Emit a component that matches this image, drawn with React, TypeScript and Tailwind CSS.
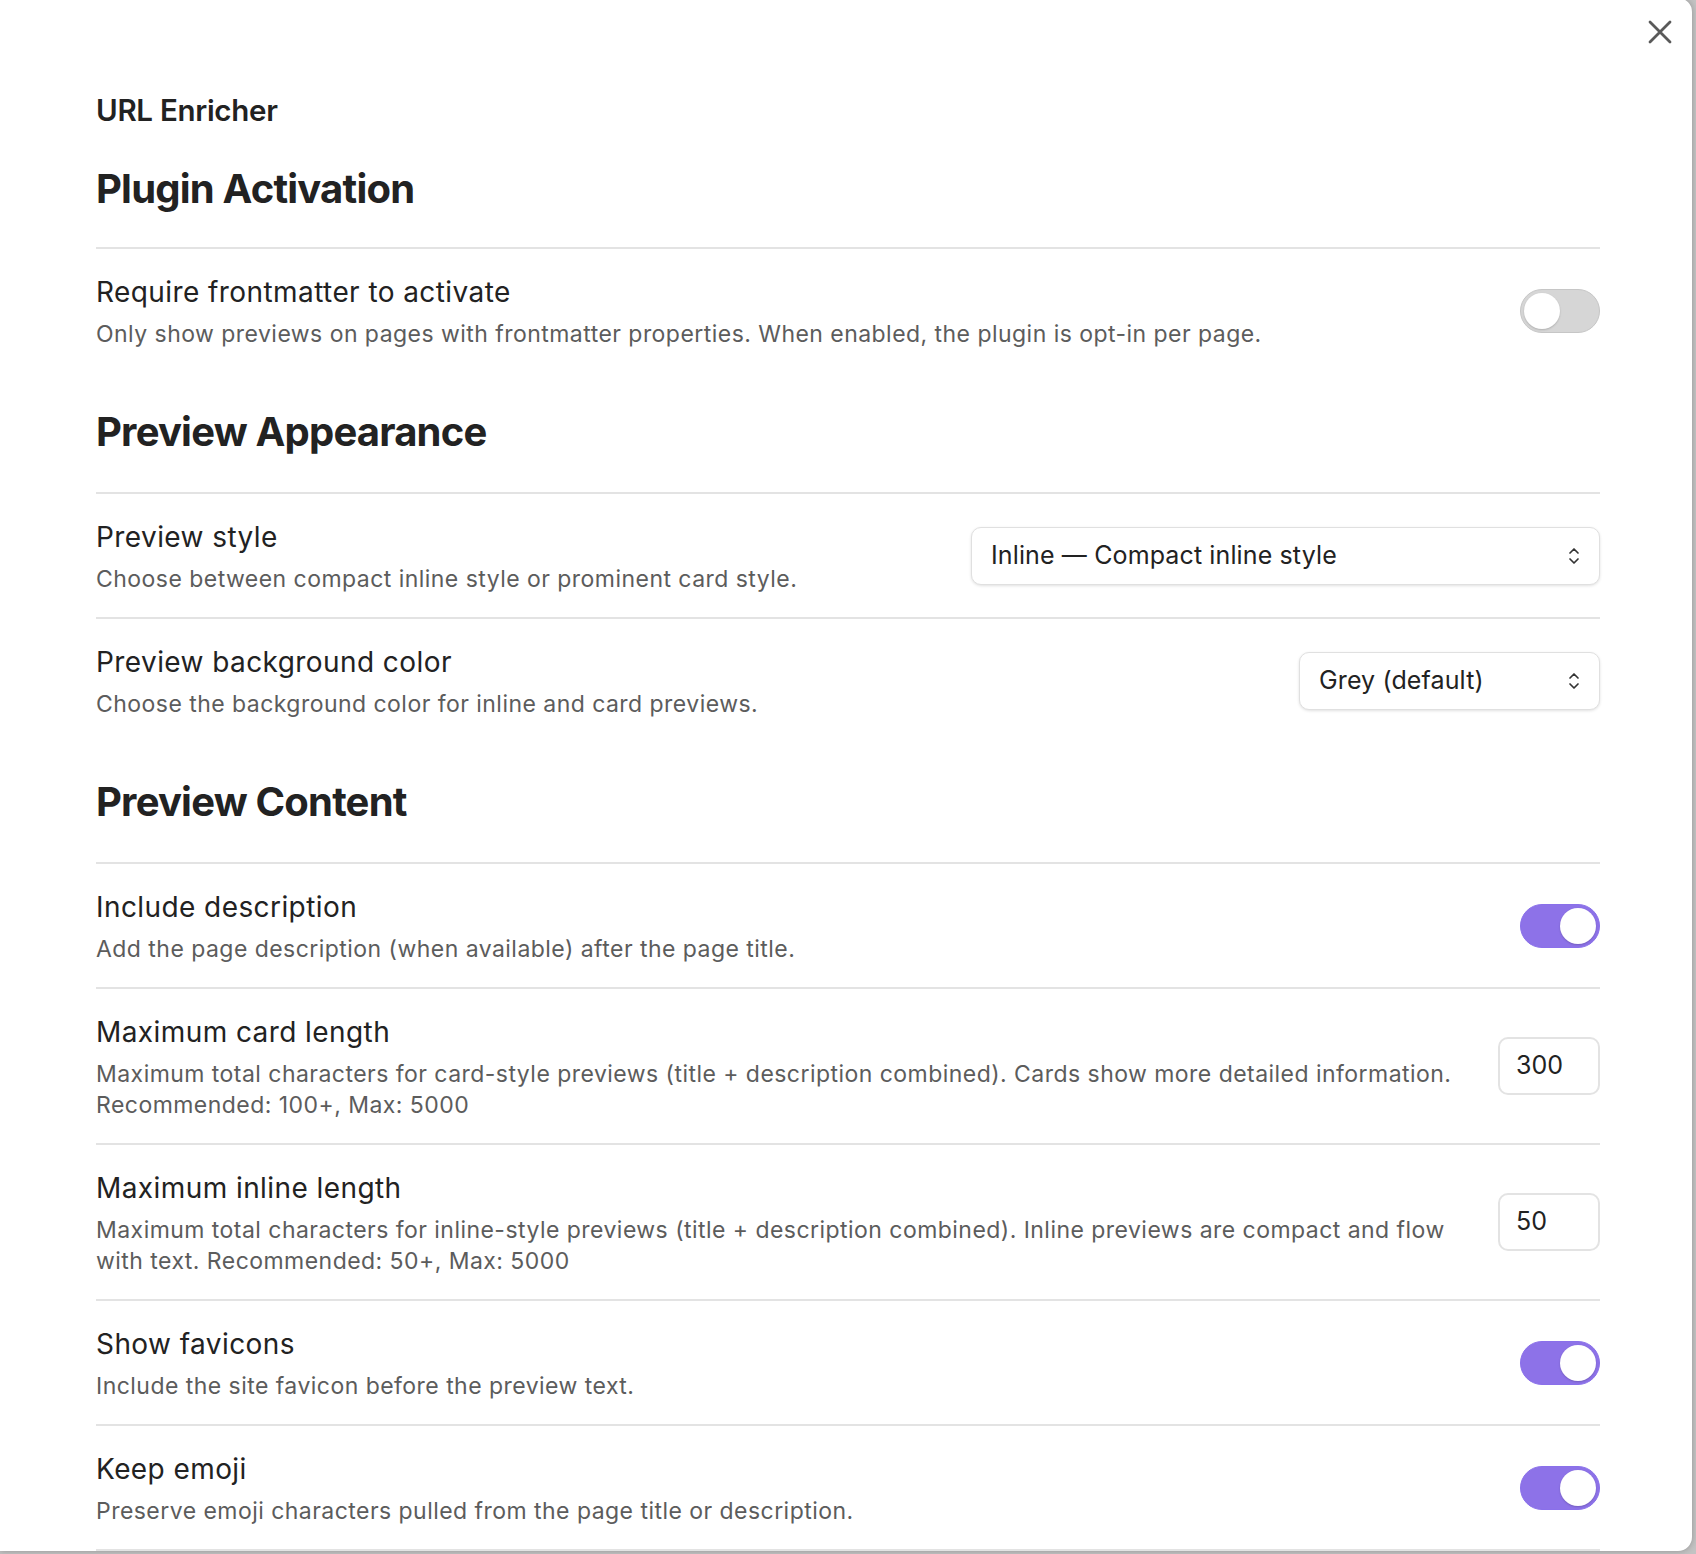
import type { ReactNode } from "react";

const font = { fontFamily: "Inter, 'Noto Sans', sans-serif" };

const Toggle = ({ on }: { on: boolean }) => (
  <div
    className={
      on
        ? "flex h-[44px] w-[80px] shrink-0 items-center justify-end rounded-full border border-[#8a70ea] bg-[#8d72e8] p-[3px]"
        : "flex h-[44px] w-[80px] shrink-0 items-center justify-start rounded-full border border-[#c6c6c6] bg-[#d6d6d6] p-[3px]"
    }
  >
    <div className="h-[36px] w-[36px] rounded-full bg-white shadow-[0_1px_2px_rgba(0,0,0,0.18)]" />
  </div>
);

const Chevrons = () => (
  <svg width="14" height="22" viewBox="0 0 14 22" fill="none" className="shrink-0">
    <path d="M3 8 L7 4 L11 8" stroke="#333" strokeWidth="1.7" strokeLinecap="round" strokeLinejoin="round" />
    <path d="M3 14 L7 18 L11 14" stroke="#333" strokeWidth="1.7" strokeLinecap="round" strokeLinejoin="round" />
  </svg>
);

const Select = ({ value, width }: { value: string; width: string }) => (
  <div
    className={`flex h-[58px] ${width} shrink-0 items-center justify-between rounded-[10px] border border-[#e0e0e0] bg-white pl-[19px] pr-[18px] text-[25px] tracking-[0.005em] text-[#222] shadow-[0_1px_3px_rgba(0,0,0,0.12)]`}
  >
    <span>{value}</span>
    <Chevrons />
  </div>
);

const NumberInput = ({ value }: { value: string }) => (
  <div className="flex h-[58px] w-[102px] shrink-0 items-center rounded-[10px] border-2 border-[#e3e3e3] bg-white pl-[16px] text-[25px] text-[#222]">
    {value}
  </div>
);

const Item = ({
  name,
  desc,
  control,
}: {
  name: string;
  desc: ReactNode;
  control: ReactNode;
}) => (
  <div className="flex items-center justify-between gap-[40px] border-t-2 border-[#e3e3e3] pb-[22px] pt-[26px]">
    <div className="min-w-0 flex-1">
      <div className="text-[28px] leading-[34px] tracking-[0.015em] text-[#222]">{name}</div>
      <div className="mt-[10px] text-[23px] leading-[31px] tracking-[0.02em] text-[#5c5c5c]">{desc}</div>
    </div>
    <div className="shrink-0 pb-[4px]">{control}</div>
  </div>
);

const Heading = ({ children, first = false }: { children: ReactNode; first?: boolean }) => (
  <h3
    className={`${first ? "pb-[34px] pt-[34px]" : "pb-[36px] pt-[36px]"} text-[40px] font-bold leading-[48px] tracking-[-0.02em] text-[#222]`}
  >
    {children}
  </h3>
);

export default function App() {
  return (
    <div className="h-[1554px] w-full overflow-hidden bg-[#c3c3c3]" style={font}>
      <div className="relative -mt-[2px] h-[1553px] w-[1692px] rounded-r-[14px] bg-white shadow-[0_0_6px_rgba(0,0,0,0.25)]">
        <button className="absolute left-[1648px] top-[22px] flex h-[24px] w-[24px] items-center justify-center">
          <svg width="24" height="24" viewBox="0 0 24 24" fill="none">
            <path d="M2 2 L22 22 M22 2 L2 22" stroke="#5a5a5a" strokeWidth="2.8" strokeLinecap="round" />
          </svg>
        </button>

        <div className="pl-[96px] pr-[92px] pt-[95px]">
          <div className="mb-[4px] text-[29.5px] font-semibold leading-[34px] tracking-[-0.01em] text-[#222]">
            URL Enricher
          </div>

          <div>
            <Heading first>Plugin Activation</Heading>
            <Item
              name="Require frontmatter to activate"
              desc="Only show previews on pages with frontmatter properties. When enabled, the plugin is opt-in per page."
              control={<Toggle on={false} />}
            />
          </div>

          <div>
            <Heading>Preview Appearance</Heading>
            <Item
              name="Preview style"
              desc="Choose between compact inline style or prominent card style."
              control={<Select value="Inline — Compact inline style" width="w-[629px]" />}
            />
            <Item
              name="Preview background color"
              desc="Choose the background color for inline and card previews."
              control={<Select value="Grey (default)" width="w-[301px]" />}
            />
          </div>

          <div>
            <Heading>Preview Content</Heading>
            <Item
              name="Include description"
              desc="Add the page description (when available) after the page title."
              control={<Toggle on />}
            />
            <Item
              name="Maximum card length"
              desc={
                <>
                  Maximum total characters for card-style previews (title + description combined). Cards show more detailed information.
                  <br />
                  Recommended: 100+, Max: 5000
                </>
              }
              control={<NumberInput value="300" />}
            />
            <Item
              name="Maximum inline length"
              desc={
                <>
                  Maximum total characters for inline-style previews (title + description combined). Inline previews are compact and flow
                  <br />
                  with text. Recommended: 50+, Max: 5000
                </>
              }
              control={<NumberInput value="50" />}
            />
            <Item
              name="Show favicons"
              desc="Include the site favicon before the preview text."
              control={<Toggle on />}
            />
            <Item
              name="Keep emoji"
              desc="Preserve emoji characters pulled from the page title or description."
              control={<Toggle on />}
            />
            <div className="border-t-2 border-[#e3e3e3]" />
          </div>
        </div>
      </div>
    </div>
  );
}
